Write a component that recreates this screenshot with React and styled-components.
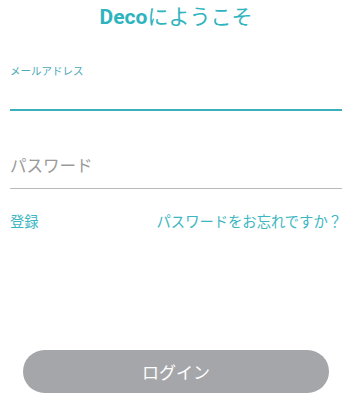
import React from 'react';
import styled, { createGlobalStyle } from 'styled-components';

const Global = createGlobalStyle`
  html, body {
    margin: 0;
    padding: 0;
    background: #fff;
  }
  body {
    font-family: "Noto Sans CJK JP", "Noto Sans", sans-serif;
  }
`;

const Screen = styled.div`
  width: 351px;
  height: 404px;
  display: flex;
  flex-direction: column;
  box-sizing: border-box;
  padding: 0 9px 0 10px;
`;

const Title = styled.h1`
  margin: 1px 0 0;
  text-align: center;
  font-size: 21px;
  line-height: 28px;
  font-weight: 400;
  color: #2db4be;
`;

const Brand = styled.span`
  font-family: Roboto, "Noto Sans", sans-serif;
  font-weight: 700;
`;

const Field = styled.div`
  display: flex;
  flex-direction: column;
  border-bottom: ${p => (p.active ? '2px solid #3bb0bb' : '1px solid #b9b9b9')};
`;

const FloatLabel = styled.label`
  font-size: 10.5px;
  line-height: 14px;
  color: #4aa9b4;
  margin-top: 33px;
  height: 45px;
`;

const Placeholder = styled.div`
  font-size: 16.5px;
  line-height: 24px;
  color: #9a9a9a;
  margin-top: 42px;
  padding-bottom: 11px;
`;

const Links = styled.div`
  display: flex;
  justify-content: space-between;
  margin-top: 22px;
`;

const Link = styled.a`
  font-size: 14.3px;
  line-height: 20px;
  color: #3cb6c1;
  text-decoration: none;
`;

const Button = styled.button`
  margin: auto 13px 11px;
  height: 43px;
  border: none;
  border-radius: 22px;
  background: #a5a6aa;
  color: #fff;
  font-family: "Noto Sans CJK JP", sans-serif;
  font-size: 17px;
`;

export default function App() {
  return (
    <>
      <Global />
      <Screen>
        <Title><Brand>Deco</Brand>にようこそ</Title>
        <Field active>
          <FloatLabel>メールアドレス</FloatLabel>
        </Field>
        <Field>
          <Placeholder>パスワード</Placeholder>
        </Field>
        <Links>
          <Link>登録</Link>
          <Link>パスワードをお忘れですか？</Link>
        </Links>
        <Button>ログイン</Button>
      </Screen>
    </>
  );
}
